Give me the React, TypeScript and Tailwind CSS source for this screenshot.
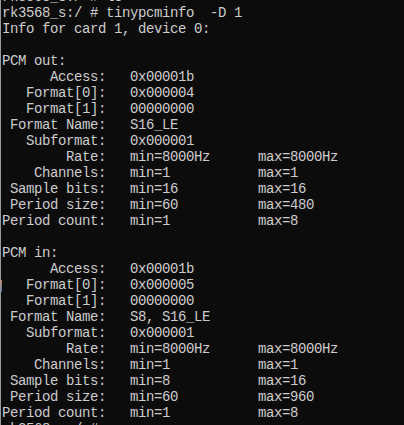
const lines: string[] = [
  "rk3568_s:/ # ls",
  "rk3568_s:/ # tinypcminfo  -D 1",
  "Info for card 1, device 0:",
  "",
  "PCM out:",
  "      Access:   0x00001b",
  "   Format[0]:   0x000004",
  "   Format[1]:   00000000",
  " Format Name:   S16_LE",
  "   Subformat:   0x000001",
  "        Rate:   min=8000Hz      max=8000Hz",
  "    Channels:   min=1           max=1",
  " Sample bits:   min=16          max=16",
  " Period size:   min=60          max=480",
  "Period count:   min=1           max=8",
  "",
  "PCM in:",
  "      Access:   0x00001b",
  "   Format[0]:   0x000005",
  "   Format[1]:   00000000",
  " Format Name:   S8, S16_LE",
  "   Subformat:   0x000001",
  "        Rate:   min=8000Hz      max=8000Hz",
  "    Channels:   min=1           max=1",
  " Sample bits:   min=8           max=16",
  " Period size:   min=60          max=960",
  "Period count:   min=1           max=8",
  "rk3568_s:/ #",
];

export default function App() {
  return (
    <div className="relative h-[425px] w-[404px] overflow-hidden border-l border-[#9a9a9a] bg-[#0c0c0c]">
      <div className="absolute left-[-1px] top-[280px] h-[12px] w-[2px] bg-gradient-to-b from-[#d9822b] to-[#3b6fb6]" />
      <pre className="-mt-[11px] pl-[1px] font-['Liberation_Mono',monospace] text-[14px] leading-[16px] tracking-[-0.4px] text-[#cccccc]">
        {lines.map((line, i) => (
          <div key={i} className="h-[16px] whitespace-pre">
            {line}
          </div>
        ))}
      </pre>
    </div>
  );
}
